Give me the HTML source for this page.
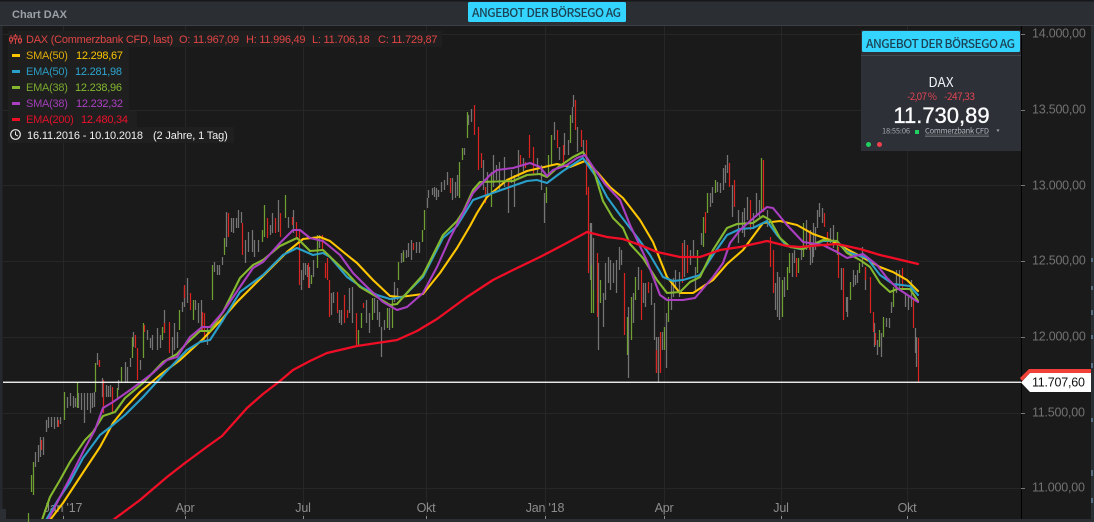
<!DOCTYPE html>
<html><head><meta charset="utf-8"><title>Chart DAX</title>
<style>
html,body{margin:0;padding:0;background:#1a1a1a;width:1094px;height:522px;overflow:hidden}
svg{display:block;position:absolute;left:0;top:0}
text{font-family:"Liberation Sans",sans-serif}
.ax{font-size:12.5px;fill:#727272;letter-spacing:-.22px}
.xl{font-size:12.5px;fill:#8c8c8c;text-anchor:middle;letter-spacing:-.2px}
.lg{font-size:11px;letter-spacing:-.24px}
.nt{font-family:"Noto Sans CJK JP","Liberation Sans",sans-serif}
</style></head><body>
<svg width="1094" height="522" viewBox="0 0 1094 522" xmlns="http://www.w3.org/2000/svg">
<rect width="1094" height="522" fill="#1a1a1a"/>
<!-- grid -->
<path d="M3 34.5H1021M3 110.5H1021M3 185.5H1021M3 261.5H1021M3 337.5H1021M3 413.5H1021M3 488.5H1021M63.5 26V517M185.5 26V517M303.5 26V517M426.5 26V517M545.5 26V517M664.5 26V517M781.5 26V517M907.5 26V517" stroke="#262626" stroke-width="1" fill="none"/>
<!-- header -->
<rect width="1094" height="25" fill="#2b2e33"/>
<rect width="1094" height="1.5" fill="#15171a"/>
<rect y="25" width="1094" height="1" fill="#3c3f44"/>
<rect y="26" width="2.5" height="496" fill="#26292d"/>
<rect x="0" y="509" width="6" height="13" fill="#2b2e33"/>
<rect y="519" width="1094" height="3" fill="#2b2e33"/>
<rect x="1091" y="26" width="3" height="496" fill="#2b2e33"/>
<path d="M1092 258v4M1092 286v4M1092 310v5M1092 335v4M1092 363v5M1092 418v4M1092 470v6M1092 498v5" stroke="#566c7e" stroke-width="2"/>
<text x="12" y="18" font-size="11" font-weight="700" fill="#9aa1a7">Chart DAX</text>
<!-- axis labels -->
<text class="xl" x="63" y="512">Jan '17</text>
<text class="xl" x="185" y="512">Apr</text>
<text class="xl" x="303" y="512">Jul</text>
<text class="xl" x="426" y="512">Okt</text>
<text class="xl" x="545" y="512">Jan '18</text>
<text class="xl" x="664" y="512">Apr</text>
<text class="xl" x="781" y="512">Jul</text>
<text class="xl" x="907" y="512">Okt</text>
<path d="M63.5 516v3M185.5 516v3M303.5 516v3M426.5 516v3M545.5 516v3M664.5 516v3M781.5 516v3M907.5 516v3" stroke="#8c8c8c"/>
<!-- candles gray -->
<path fill="none" stroke="#757575" stroke-width="1.25" d="M35.5 452V467M38.5 445V462M40.5 437V457M43.5 437V455M46.5 420V432M48.5 417V428M51.5 417V427M54.5 417V429M57.5 417V427M60.5 417V424M67.5 397V408M70.5 393V406M73.5 396V408M75.5 398V407M78.5 393V408M81.5 393V410M84.5 393V423M87.5 393V410M90.5 393V413M92.5 393V408M94.5 392V407M97.5 353V365M102.5 378V397M106.5 385V397M108.5 386V397M110.5 385V397M118.5 380V390M125.5 362V382M127.5 367V383M130.5 358V367M133.5 332V347M140.5 360V370M147.5 330V340M150.5 338V348M152.5 335V350M157.5 328V350M160.5 335V348M164.5 310V333M172.5 337V358M174.5 323V350M177.5 332V348M182.5 302V312M184.5 287V307M187.5 278V303M195.5 300V310M198.5 303V323M201.5 300V330M207.5 328V345M214.5 262V272M217.5 265V275M219.5 265V275M222.5 257V265M226.5 212V247M231.5 218V232M233.5 218V233M236.5 218V228M238.5 210V228M241.5 212V223M245.5 240V263M248.5 232V252M252.5 230V252M254.5 240V257M258.5 240V252M270.5 225V235M272.5 213V233M278.5 200V232M288.5 217V228M293.5 210V233M301.5 270V290M303.5 263V280M305.5 263V275M307.5 265V277M309.5 267V288M313.5 260V277M319.5 235V248M331.5 293V315M333.5 292V303M339.5 310V323M341.5 310V325M349.5 288V313M352.5 287V323M366.5 300V323M369.5 313V333M374.5 298V313M377.5 300V320M379.5 312V327M381.5 327V357M384.5 320V330M389.5 308V330M394.5 282V302M397.5 288V300M401.5 253V263M403.5 250V262M406.5 250V258M408.5 243V257M411.5 240V260M416.5 242V253M419.5 242V253M427.5 198V208M428.5 190V198M432.5 188V195M434.5 187V197M436.5 188V200M438.5 190V197M441.5 182V192M444.5 180V190M447.5 172V185M452.5 178V200M455.5 182V198M457.5 175V196M464.5 148V155M468.5 115V125M471.5 109V122M483.5 160V190M487.5 172V197M493.5 155V187M496.5 165V180M499.5 162V190M504.5 157V187M508.5 180V213M511.5 170V183M514.5 175V207M518.5 150V177M523.5 158V173M537.5 158V175M541.5 165V190M544.5 193V223M554.5 122V140M559.5 147V160M564.5 133V155M568.5 140V155M572.5 107V123M573.5 95V107M577.5 127V152M583.5 140V155M590.5 223V280M591.5 223V265M593.5 238V290M598.5 263V350M603.5 293V327M605.5 263V300M608.5 257V283M610.5 260V290M613.5 263V283M616.5 260V293M619.5 247V270M621.5 250V265M628.5 307V378M633.5 293V323M638.5 267V290M643.5 283V303M645.5 283V307M651.5 283V305M654.5 303V340M656.5 337V373M658.5 337V382M662.5 332V350M666.5 313V368M671.5 283V310M673.5 278V297M675.5 270V287M679.5 272V297M684.5 240V277M690.5 250V265M693.5 240V257M695.5 267V290M701.5 233V245M710.5 193V207M712.5 187V203M717.5 182V192M720.5 183V193M723.5 168V190M725.5 165V183M727.5 155V173M732.5 185V217M738.5 210V243M742.5 212V233M744.5 208V237M747.5 197V220M753.5 213V227M756.5 193V217M759.5 200V217M767.5 210V227M775.5 283V310M777.5 272V317M779.5 277V320M784.5 277V297M792.5 253V277M794.5 250V263M801.5 247V260M806.5 220V250M810.5 230V265M812.5 245V263M813.5 223V257M815.5 227V250M817.5 210V228M819.5 203V217M822.5 208V223M830.5 228V243M833.5 225V248M841.5 268V290M846.5 297V312M847.5 297V317M853.5 270V287M855.5 275V285M857.5 270V283M862.5 247V267M865.5 267V290M874.5 323V347M877.5 340V355M881.5 333V357M886.5 318V327M889.5 318V328M891.5 302V313M896.5 270V293M899.5 270V290M905.5 293V307M908.5 297V310M911.5 280V307M915.5 328V353M916.5 337V367"/>
<!-- candles green -->
<path fill="none" stroke="#6f9e32" stroke-width="1.25" d="M28.5 513V522M31.5 475V492M33.5 462V495M64.5 392V420M77.5 383V408M95.5 363V392M117.5 388V400M121.5 367V382M132.5 337V358M143.5 323V358M162.5 327V340M179.5 310V330M193.5 300V320M212.5 265V300M224.5 238V255M262.5 230V242M264.5 205V237M285.5 195V218M317.5 235V268M311.5 275V284M358.5 330V345M361.5 313V328M372.5 298V320M387.5 308V328M392.5 298V328M398.5 262V280M403.5 252V262M422.5 230V242M424.5 210V230M459.5 162V198M462.5 148V160M467.5 112V138M491.5 172V207M546.5 187V203M548.5 155V177M551.5 135V165M570.5 115V143M591.5 265V313M593.5 290V313M600.5 280V303M627.5 317V355M631.5 297V340M635.5 277V300M664.5 327V350M668.5 297V322M697.5 250V273M703.5 217V247M707.5 193V213M715.5 180V193M761.5 158V210M782.5 280V317M787.5 267V290M789.5 253V273M798.5 258V273M803.5 223V257M837.5 232V255M850.5 282V300M859.5 263V273M879.5 330V347M883.5 317V337M893.5 287V307"/>
<!-- candles red -->
<path fill="none" stroke="#d9241f" stroke-width="1.2" d="M41.5 440V450M58.5 420V427M99.5 360V367M103.5 380V413M112.5 387V413M135.5 335V348M137.5 348V380M144.5 325V332M169.5 322V353M164.5 323V333M184.5 285V298M190.5 293V310M202.5 312V330M204.5 313V340M228.5 213V237M242.5 223V255M267.5 218V238M275.5 218V233M280.5 213V237M299.5 230V285M308.5 263V288M292.5 217V225M296.5 222V237M322.5 235V250M325.5 263V278M327.5 258V280M329.5 280V317M337.5 292V313M344.5 295V323M347.5 310V318M356.5 313V345M363.5 303V308M413.5 243V250M450.5 178V193M474.5 105V135M478.5 127V170M481.5 153V168M485.5 187V203M508.5 180V190M520.5 155V167M525.5 162V168M529.5 135V158M533.5 147V175M557.5 130V148M563.5 145V167M575.5 100V130M581.5 130V147M586.5 140V195M588.5 187V273M597.5 253V317M624.5 273V335M641.5 270V320M648.5 282V293M660.5 332V373M656.5 350V373M682.5 243V283M687.5 245V273M705.5 212V233M729.5 163V187M734.5 180V207M750.5 200V230M763.5 160V212M770.5 237V267M773.5 250V293M796.5 258V277M809.5 233V250M824.5 213V227M827.5 232V245M838.5 247V278M843.5 268V320M865.5 267V280M870.5 277V313M873.5 312V332M875.5 333V345M902.5 268V290M913.5 300V328M918.5 338V382"/>
<clipPath id="c"><rect x="3" y="26" width="1018" height="493"/></clipPath>
<g clip-path="url(#c)" fill="none" stroke-width="2.1" stroke-linejoin="round" stroke-linecap="round">
<!-- SMA50 -->
<polyline stroke="#ffc600" points="50,520 63,503 86,468 100,447 113,423 125,408 140,392 153,381 160,375 180,360 203,339 223,318 237,302 263,276 287,252 303,239 320,237 330,241 347,255 357,263 373,280 390,296 400,297 423,294 440,273 457,248 470,226 477,213 487,197 507,180 527,171 540,168 557,164 570,167 585,161 597,172 610,187 623,198 640,220 653,242 667,277 680,293 693,293 713,280 727,264 743,250 763,223 780,221 797,225 813,234 830,240 843,247 860,256 880,267 893,272 907,280 918,291"/>
<!-- EMA50 -->
<polyline stroke="#2a9fc9" points="46,520 58,500 70,482 83,458 100,435 113,425 125,415 143,397 163,375 187,350 200,342 210,340 223,320 240,292 263,275 283,255 297,248 313,255 323,253 330,257 347,277 363,288 377,295 390,299 403,297 423,277 443,238 457,226 473,200 487,195 507,188 527,181 537,180 547,183 563,171 583,158 597,178 607,197 620,215 637,237 650,255 663,277 673,281 683,280 700,275 713,255 727,235 740,229 753,228 767,221 777,235 787,246 800,249 823,241 837,241 847,252 867,258 880,275 893,284 910,286 918,295"/>
<!-- EMA38 -->
<polyline stroke="#84b82f" points="42,520 50,497 60,480 70,462 85,440 93,432 103,416 115,412 125,398 143,383 163,362 177,354 187,343 200,331 210,331 223,312 240,278 253,265 263,260 280,246 297,238 310,251 323,250 347,273 360,287 377,297 390,305 397,304 423,275 443,235 457,221 463,212 473,190 480,182 513,181 527,175 540,174 547,177 557,168 573,157 583,152 593,168 603,201 613,218 623,228 630,244 643,258 657,280 667,293 680,292 690,282 700,277 713,250 727,228 737,224 753,223 763,216 770,220 780,238 790,247 803,249 823,240 837,241 847,253 860,260 870,267 880,283 890,292 897,289 910,289 918,301"/>
<!-- SMA38 -->
<polyline stroke="#aa3fc2" points="48,520 60,497 70,478 85,448 95,430 103,408 113,402 133,388 153,373 167,360 177,357 190,337 202,327 210,327 223,312 240,287 253,268 263,262 280,243 293,230 300,230 310,238 323,241 340,255 353,273 367,287 383,302 397,310 407,307 423,293 437,267 450,238 463,213 473,193 490,175 497,170 513,168 530,163 540,167 547,176 553,170 567,165 577,158 585,155 593,167 605,184 620,200 630,225 647,261 660,295 667,300 683,300 695,298 713,277 723,263 730,243 740,230 757,215 767,207 773,208 787,225 803,242 823,245 837,252 847,258 863,254 877,265 887,278 897,288 918,302"/>
<!-- EMA200 -->
<polyline stroke="#f00e26" stroke-width="2.3" points="113,520 140,500 167,477 185,463 208,446 222,436 247,408 263,394 280,381 293,370 310,361 327,353 357,346 397,340 417,331 437,319 467,297 493,280 513,270 540,257 563,245 587,232 607,237 623,239 640,245 657,252 680,257 700,257 720,250 740,247 767,241 787,246 800,247 823,245 837,244 860,249 880,255 893,258 918,264"/>
</g>
<!-- white line -->
<rect x="3" y="381.6" width="1018" height="1.3" fill="#fff"/>
<!-- axis -->
<rect x="1021" y="26" width="1" height="493" fill="#000"/>
<path d="M1021 34.5h4M1021 110.5h4M1021 185.5h4M1021 261.5h4M1021 337.5h4M1021 413.5h4M1021 488.5h4" stroke="#777"/>
<text class="ax" x="1032" y="37.5">14.000,00</text>
<text class="ax" x="1032" y="113.5">13.500,00</text>
<text class="ax" x="1032" y="189.5">13.000,00</text>
<text class="ax" x="1032" y="264.5">12.500,00</text>
<text class="ax" x="1032" y="340.5">12.000,00</text>
<text class="ax" x="1032" y="416.5">11.500,00</text>
<text class="ax" x="1032" y="491.5">11.000,00</text>
<!-- price tag -->
<polygon points="1029,369 1091,369 1091,373 1030,373 1022,381 1020,378" fill="#f04038"/>
<polygon points="1030,373 1091,373 1091,392 1030,392 1021,382.5" fill="#fff"/>
<text x="1032" y="386.5" font-size="12.5" letter-spacing="-.22" fill="#111">11.707,60</text>
<!-- legend -->
<rect x="8" y="31" width="434" height="16" fill="#1f1f1f"/>
<rect x="8" y="47" width="121" height="16" fill="#1f1f1f"/>
<rect x="8" y="63" width="121" height="16" fill="#1f1f1f"/>
<rect x="8" y="79" width="121" height="16" fill="#1f1f1f"/>
<rect x="8" y="95" width="121" height="16" fill="#1f1f1f"/>
<rect x="8" y="111" width="129" height="16" fill="#1f1f1f"/>
<rect x="8" y="127" width="226" height="16" fill="#1f1f1f"/>
<path d="M11 35v9M15.5 34v10M20 35v9" stroke="#e04545"/><rect x="9.5" y="38" width="3" height="3" fill="#1f1f1f" stroke="#e04545"/><rect x="14" y="36" width="3" height="3" fill="#1f1f1f" stroke="#e04545"/><rect x="18.5" y="39" width="3" height="3" fill="#1f1f1f" stroke="#e04545"/>
<text class="lg" x="26" y="43" fill="#e04545">DAX (Commerzbank CFD, last)</text>
<text class="lg" x="179" y="43" fill="#e04545">O: 11.967,09</text>
<text class="lg" x="246" y="43" fill="#e04545">H: 11.996,49</text>
<text class="lg" x="312" y="43" fill="#e04545">L: 11.706,18</text>
<text class="lg" x="378" y="43" fill="#e04545">C: 11.729,87</text>
<rect x="12" y="54" width="8" height="3" fill="#ffc600"/>
<text class="lg" x="26" y="59" fill="#dcab0c">SMA(50)</text><text class="lg" x="76" y="59" fill="#fcc600">12.298,67</text>
<rect x="12" y="70" width="8" height="3" fill="#2a9fc9"/>
<text class="lg" x="26" y="75" fill="#2a9abf">EMA(50)</text><text class="lg" x="75" y="75" fill="#2ca6d0">12.281,98</text>
<rect x="12" y="86" width="8" height="3" fill="#84b82f"/>
<text class="lg" x="26" y="91" fill="#78a82e">EMA(38)</text><text class="lg" x="75" y="91" fill="#84b830">12.238,96</text>
<rect x="12" y="102" width="8" height="3" fill="#aa3fc2"/>
<text class="lg" x="26" y="107" fill="#a03eb6">SMA(38)</text><text class="lg" x="76" y="107" fill="#ae40c6">12.232,32</text>
<rect x="12" y="118" width="8" height="3" fill="#f00e26"/>
<text class="lg" x="26" y="123" fill="#e0102a">EMA(200)</text><text class="lg" x="81" y="123" fill="#f0102c">12.480,34</text>
<circle cx="15.5" cy="134.5" r="4.8" fill="none" stroke="#e6e6e6" stroke-width="1.2"/><path d="M15.5 131.5v3.2l2.4 1.4" fill="none" stroke="#e6e6e6"/>
<text class="lg" x="27" y="139" fill="#f0f0f0" style="letter-spacing:-.14px">16.11.2016 - 10.10.2018</text>
<text class="lg" x="153" y="139" fill="#f0f0f0" style="letter-spacing:-.14px">(2 Jahre, 1 Tag)</text>
<!-- top banner -->
<rect x="468" y="2" width="158" height="20" rx="1.5" fill="#33d4ff"/>
<text class="nt" x="472" y="17" font-size="12" font-weight="500" fill="#1c4355" textLength="149" lengthAdjust="spacing">ANGEBOT DER BÖRSEGO AG</text>
<!-- quote panel -->
<rect x="861" y="30" width="160" height="121" fill="#2d3036"/>
<rect x="862" y="31" width="158" height="21" rx="1.5" fill="#33d4ff"/>
<rect x="861" y="55" width="160" height="1" fill="#44474d"/>
<text class="nt" x="866" y="48" font-size="12" font-weight="500" fill="#1c4355" textLength="149" lengthAdjust="spacing">ANGEBOT DER BÖRSEGO AG</text>
<text class="nt" x="941" y="87" font-size="13.5" fill="#eceff2" text-anchor="middle">DAX</text>
<text class="nt" x="907" y="100" font-size="10" fill="#e04454" textLength="30">-2,07 %</text>
<text class="nt" x="944" y="100" font-size="10" fill="#e04454" textLength="31">-247,33</text>
<text x="941.5" y="123" font-size="22" fill="#fbfcfd" text-anchor="middle" stroke="#fbfcfd" stroke-width=".35">11.730,89</text>
<text class="nt" x="882" y="133.5" font-size="7.5" fill="#a6aab0" textLength="28">18:55:06</text>
<rect x="915" y="130" width="4" height="4" fill="#20d060"/>
<text class="nt" x="925" y="133.5" font-size="7.5" fill="#b4b8be" textLength="64">Commerzbank CFD</text>
<path d="M925 135h64M925 136.5h64" stroke="#70747a" stroke-width=".8"/>
<path d="M996.5 129.5h3l-1.5 2.5z" fill="#a6aab0"/>
<circle cx="868.5" cy="144.5" r="2.5" fill="#20d060"/>
<circle cx="879.5" cy="144.5" r="2.5" fill="#f04050"/>
</svg>
</body></html>
